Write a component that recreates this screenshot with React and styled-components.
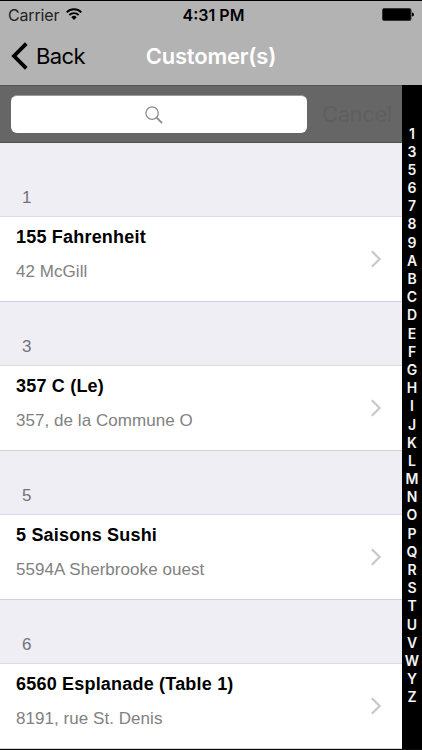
import React from 'react';
import styled, { createGlobalStyle } from 'styled-components';

const GlobalStyle = createGlobalStyle`
  * { box-sizing: border-box; }
  body { margin: 0; background: #000; }
`;

const Screen = styled.div`
  width: 422px;
  height: 750px;
  display: flex;
  flex-direction: column;
  overflow: hidden;
  background: #b3b3b3;
  border-top: 1px solid #000;
  border-bottom: 1px solid #0c0c0c;
  font-family: 'Liberation Sans', Arial, sans-serif;
`;

const StatusBar = styled.header`
  height: 28px;
  flex: none;
  display: grid;
  grid-template-columns: 1fr auto 1fr;
  align-items: center;
  padding: 0 8px;
  font-family: Inter, sans-serif;
  font-size: 16px;
  line-height: 28px;
  color: #222;
`;

const Carrier = styled.div`
  display: flex;
  align-items: center;
  gap: 7px;
  letter-spacing: -0.15px;
`;

const WifiSlot = styled.span`
  display: flex;
  padding-bottom: 2px;
`;

const Clock = styled.div`
  font-weight: 600;
  font-size: 16px;
  padding-left: 5px;
  color: #000;
`;

const BatterySlot = styled.div`
  display: flex;
  justify-content: flex-end;
  padding-bottom: 2px;
`;

const NavBar = styled.nav`
  height: 56px;
  flex: none;
  display: grid;
  grid-template-columns: 1fr auto 1fr;
  align-items: center;
  padding: 0 11px 2px;
  font-family: Inter, sans-serif;
`;

const BackButton = styled.button`
  display: flex;
  align-items: center;
  gap: 8px;
  padding: 0;
  border: 0;
  background: none;
  font: 400 22px/28px Inter, sans-serif;
  letter-spacing: -0.6px;
  color: #000;
`;

const NavTitle = styled.h1`
  margin: 0;
  font-size: 22px;
  line-height: 28px;
  font-weight: 600;
  letter-spacing: -0.2px;
  color: #fff;
`;

const Content = styled.div`
  flex: 1;
  min-height: 0;
  display: flex;
`;

const Main = styled.main`
  width: 402px;
  display: flex;
  flex-direction: column;
  background: #efeef4;
`;

const SearchBar = styled.div`
  height: 58px;
  flex: none;
  display: flex;
  align-items: center;
  padding: 0 10px 0 11px;
  background: #666;
  border-top: 1px solid #565656;
  border-bottom: 1px solid #505050;
`;

const SearchField = styled.div`
  width: 296px;
  height: 38px;
  flex: none;
  display: flex;
  align-items: center;
  justify-content: center;
  padding-right: 10px;
  border-radius: 6px;
  background: #fff;
  border-top: 1px solid #9a999e;
`;

const CancelButton = styled.button`
  margin-left: 15px;
  padding: 0;
  border: 0;
  background: none;
  font: 400 22px/28px Inter, sans-serif;
  letter-spacing: -0.4px;
  color: #5f5f5f;
`;

const SectionHeader = styled.h2`
  height: ${(p) => (p.$first ? 74 : 64)}px;
  flex: none;
  display: flex;
  align-items: flex-end;
  margin: 0;
  padding: 0 22px 7px;
  border-bottom: 1px solid #dcdbe0;
  font-size: 17px;
  line-height: 22px;
  font-weight: 400;
  color: #737377;
`;

const Row = styled.article`
  height: 85px;
  flex: none;
  display: flex;
  align-items: center;
  justify-content: space-between;
  padding: 0 20px 0 16px;
  background: #fff;
  border-bottom: 1px solid #d2d1d6;
`;

const RowText = styled.div`
  align-self: flex-start;
  padding-top: 9px;
`;

const Name = styled.div`
  font-size: 18px;
  line-height: 22px;
  font-weight: 700;
  letter-spacing: 0.2px;
  color: #000;
`;

const Address = styled.div`
  margin-top: 13px;
  font-size: 17px;
  line-height: 22px;
  letter-spacing: 0.05px;
  color: #818181;
`;

const IndexStrip = styled.aside`
  width: 20px;
  display: flex;
  flex-direction: column;
  align-items: center;
  padding-top: 39.5px;
  background: #000;
`;

const IndexLetter = styled.span`
  height: 18.2px;
  flex: none;
  font: 600 14px/18.2px Inter, sans-serif;
  color: #f4f4f4;
`;

const sections = [
  { key: '1', name: '155 Fahrenheit', address: '42 McGill' },
  { key: '3', name: '357 C (Le)', address: '357, de la Commune O' },
  { key: '5', name: '5 Saisons Sushi', address: '5594A Sherbrooke ouest' },
  { key: '6', name: '6560 Esplanade (Table 1)', address: '8191, rue St. Denis' },
];

const indexLetters = [...'1356789ABCDEFGHIJKLMNOPQRSTUVWYZ'];

const WifiIcon = () => (
  <svg width="16" height="12" viewBox="0 0 16 12" fill="none" stroke="#000" strokeWidth="1.8">
    <path d="M.7 4.3a10.3 10.3 0 0 1 14.6 0" />
    <path d="M3.3 7a6.6 6.6 0 0 1 9.4 0" />
    <path d="M8 12 5.3 9.2a3.8 3.8 0 0 1 5.4 0Z" fill="#000" stroke="none" />
  </svg>
);

const BatteryIcon = () => (
  <svg width="32" height="13" viewBox="0 0 32 13">
    <rect x=".5" y=".5" width="28.5" height="12" rx="1.6" fill="#000" stroke="#333" />
    <path d="M30 4.5q2 .2 2 2t-2 2Z" fill="#000" />
  </svg>
);

const BackIcon = () => (
  <svg width="17" height="28" viewBox="0 0 17 28" fill="none" stroke="#000" strokeWidth="3.8">
    <path d="M15.3 1.6 3 14l12.3 12.4" />
  </svg>
);

const SearchIcon = () => (
  <svg width="18" height="18" viewBox="0 0 18 18" fill="none" stroke="#8e8e93">
    <circle cx="7.1" cy="7.1" r="6.2" strokeWidth="1.3" />
    <path d="m11.5 11.5 5.6 5.6" strokeWidth="1.9" />
  </svg>
);

const Chevron = () => (
  <svg width="12" height="18" viewBox="0 0 12 18" fill="none" stroke="#c7c7cc" strokeWidth="2.2">
    <path d="m1.8 1.2 7.8 7.8-7.8 7.8" />
  </svg>
);

export default function App() {
  return (
    <>
      <GlobalStyle />
      <Screen>
        <StatusBar>
          <Carrier>Carrier <WifiSlot><WifiIcon /></WifiSlot></Carrier>
          <Clock>4:31 PM</Clock>
          <BatterySlot><BatteryIcon /></BatterySlot>
        </StatusBar>
        <NavBar>
          <BackButton><BackIcon />Back</BackButton>
          <NavTitle>Customer(s)</NavTitle>
        </NavBar>
        <Content>
          <Main>
            <SearchBar>
              <SearchField><SearchIcon /></SearchField>
              <CancelButton>Cancel</CancelButton>
            </SearchBar>
            {sections.map((s, i) => (
              <React.Fragment key={s.key}>
                <SectionHeader $first={i === 0}>{s.key}</SectionHeader>
                <Row>
                  <RowText>
                    <Name>{s.name}</Name>
                    <Address>{s.address}</Address>
                  </RowText>
                  <Chevron />
                </Row>
              </React.Fragment>
            ))}
          </Main>
          <IndexStrip>
            {indexLetters.map((l) => <IndexLetter key={l}>{l}</IndexLetter>)}
          </IndexStrip>
        </Content>
      </Screen>
    </>
  );
}
